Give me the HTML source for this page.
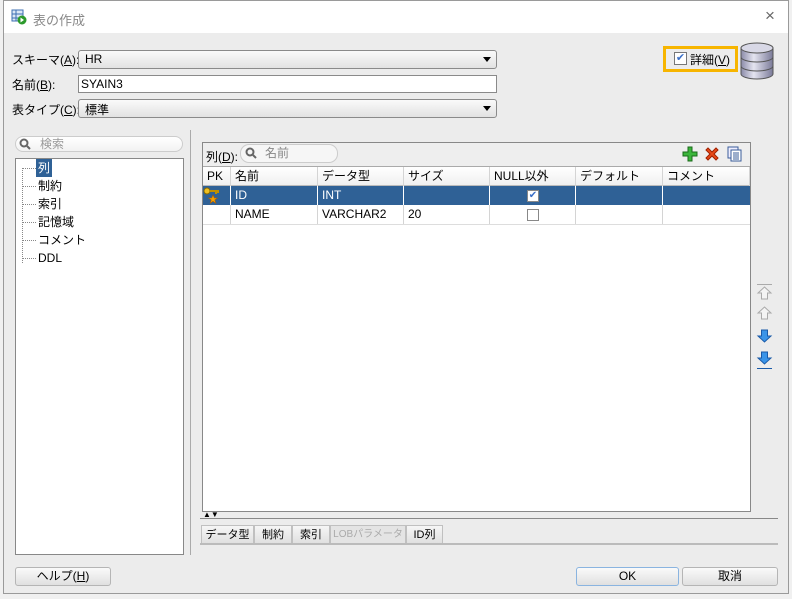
<!DOCTYPE html>
<html><head><meta charset="utf-8"><style>
*{box-sizing:border-box;margin:0;padding:0}
body{width:792px;height:599px;background:#f0f0f0;font-family:"Liberation Sans","Noto Sans CJK JP",sans-serif;font-size:12px;color:#000;position:relative;overflow:hidden}
.a{position:absolute;white-space:nowrap}
.win{left:3px;top:0;width:786px;height:594px;background:#ececec;border:1px solid #9a9a9a}
.title{left:4px;top:1px;width:784px;height:32px;background:#fff}
.combo{background:linear-gradient(#fafafa,#e2e2e2);border:1px solid #8a8a8a;border-radius:3px;padding:1px 6px;height:19px}
.combo:after{content:"";position:absolute;right:5px;top:6px;border:4px solid transparent;border-top:5px solid #000}
.btn{background:linear-gradient(#fafafa,#e0e0e0);border:1px solid #b5b5b5;border-radius:3px;text-align:center;height:19px;line-height:17px}
.td{position:absolute;height:19px;line-height:19px;padding-left:4px;border-right:1px solid #d4d4d4}
.tab{position:absolute;top:525px;height:19px;line-height:18px;text-align:center;background:linear-gradient(#f6f6f6,#e0e0e0);border:1px solid #c0c0c0;font-size:11px;white-space:nowrap;overflow:hidden}
</style></head><body>
<div class="a win"></div>
<div class="a title"></div>
<svg class="a" style="left:11px;top:9px" width="16" height="16"><rect x="1" y="1" width="11" height="11" fill="#dbe7f5" stroke="#3d6fb2"/><line x1="1" y1="5" x2="12" y2="5" stroke="#3d6fb2"/><line x1="1" y1="9" x2="12" y2="9" stroke="#3d6fb2"/><line x1="5" y1="1" x2="5" y2="12" stroke="#3d6fb2"/><circle cx="11" cy="11" r="4.5" fill="#2c9a2c"/><path d="M9.5 8.5 L13 11 L9.5 13.5Z" fill="#fff"/></svg>
<div class="a" style="left:33px;top:10px;color:#888;font-size:13px">表の作成</div>
<div class="a" style="left:765px;top:6px;color:#666;font-size:17px">×</div>

<div class="a" style="left:12px;top:51px">スキーマ(<u>A</u>):</div>
<div class="a combo" style="left:78px;top:50px;width:419px">HR</div>
<div class="a" style="left:12px;top:76px">名前(<u>B</u>):</div>
<div class="a" style="left:78px;top:75px;width:419px;height:18px;background:#fff;border:1px solid #8a8a8a;padding:1px 2px">SYAIN3</div>
<div class="a" style="left:12px;top:101px">表タイプ(<u>C</u>):</div>
<div class="a combo" style="left:78px;top:99px;width:419px">標準</div>

<div class="a" style="left:663px;top:46px;width:75px;height:26px;border:3px solid #f7b500"></div>
<div class="a" style="left:674px;top:52px;width:13px;height:13px;border:1px solid #777;background:#fff;color:#3a6fc8;font-size:11px;line-height:11px;text-align:center">✔</div>
<div class="a" style="left:690px;top:51px">詳細(<u>V</u>)</div>
<svg class="a" style="left:739px;top:42px" width="36" height="40"><defs><linearGradient id="g" x1="0" x2="1"><stop offset="0" stop-color="#8a8aa8"/><stop offset=".4" stop-color="#e4e4f0"/><stop offset="1" stop-color="#7a7a98"/></linearGradient></defs><path d="M2 6 V32 A16 5 0 0 0 34 32 V6Z" fill="url(#g)" stroke="#555"/><ellipse cx="18" cy="6" rx="16" ry="5" fill="#d8d8e6" stroke="#555"/><path d="M2 15 A16 5 0 0 0 34 15 M2 24 A16 5 0 0 0 34 24" fill="none" stroke="#555"/></svg>

<div class="a" style="left:15px;top:136px;width:168px;height:16px;border:1px solid #ccc;border-radius:8px;background:linear-gradient(#fff,#f2f2f2);color:#999;padding-left:24px;line-height:14px">検索</div>
<svg class="a" style="left:19px;top:138px" width="12" height="12"><circle cx="5" cy="5" r="3.5" fill="none" stroke="#666" stroke-width="2"/><line x1="8" y1="8" x2="11" y2="11" stroke="#666" stroke-width="2"/></svg>
<div class="a" style="left:15px;top:158px;width:169px;height:397px;background:#fff;border:1px solid #888"></div>
<div class="a" style="left:22px;top:168px;width:1px;height:95px;border-left:1px dotted #888"></div>
<div class="a" style="left:36px;top:159px;background:#2f6196;color:#fff;padding:0 2px;height:18px;line-height:18px">列</div>
<div class="a" style="left:38px;top:177px;line-height:18px">制約<br>索引<br>記憶域<br>コメント<br>DDL</div>
<div class="a" style="left:22px;top:168px;width:14px;border-top:1px dotted #888"></div>
<div class="a" style="left:22px;top:186px;width:14px;border-top:1px dotted #888"></div>
<div class="a" style="left:22px;top:204px;width:14px;border-top:1px dotted #888"></div>
<div class="a" style="left:22px;top:222px;width:14px;border-top:1px dotted #888"></div>
<div class="a" style="left:22px;top:240px;width:14px;border-top:1px dotted #888"></div>
<div class="a" style="left:22px;top:258px;width:14px;border-top:1px dotted #888"></div>

<div class="a" style="left:190px;top:130px;width:1px;height:425px;background:#aaa"></div>

<div class="a" style="left:202px;top:142px;width:549px;height:370px;background:#fff;border:1px solid #888"></div>
<div class="a" style="left:203px;top:143px;width:547px;height:24px;background:#eee;border-bottom:1px solid #aaa"></div>
<div class="a" style="left:206px;top:148px">列(<u>D</u>):</div>
<div class="a" style="left:240px;top:144px;width:98px;height:19px;border:1px solid #ccc;border-radius:9px;background:#f6f6f6;color:#888;padding-left:24px;line-height:17px">名前</div>
<svg class="a" style="left:245px;top:147px" width="12" height="12"><circle cx="5" cy="5" r="3.5" fill="none" stroke="#666" stroke-width="2"/><line x1="8" y1="8" x2="11" y2="11" stroke="#666" stroke-width="2"/></svg>
<svg class="a" style="left:682px;top:146px" width="16" height="16"><path d="M6 1h4v5h5v4h-5v5h-4v-5h-5v-4h5z" fill="#3bb53b" stroke="#1a6a1a"/></svg>
<svg class="a" style="left:704px;top:146px" width="16" height="16"><path d="M2 4L4 2L8 6L12 2L14 4L10 8L14 12L12 14L8 10L4 14L2 12L6 8Z" fill="#e84a1a" stroke="#a02000"/></svg>
<svg class="a" style="left:727px;top:146px" width="16" height="16"><rect x="1" y="1" width="10" height="11" fill="#eef" stroke="#3a5c9a"/><rect x="4" y="4" width="10" height="11" fill="#fff" stroke="#3a5c9a"/><path d="M6 7h6M6 9h6M6 11h6M6 13h6" stroke="#3a5c9a"/></svg>

<div class="a" style="left:203px;top:167px;width:547px;height:19px;background:linear-gradient(#fff,#f0f0f0);border-bottom:1px solid #bbb"></div>
<div class="td" style="left:203px;top:167px;width:28px">PK</div>
<div class="td" style="left:231px;top:167px;width:87px">名前</div>
<div class="td" style="left:318px;top:167px;width:86px">データ型</div>
<div class="td" style="left:404px;top:167px;width:86px">サイズ</div>
<div class="td" style="left:490px;top:167px;width:86px">NULL以外</div>
<div class="td" style="left:576px;top:167px;width:87px">デフォルト</div>
<div class="td" style="left:663px;top:167px;width:87px">コメント</div>

<div class="a" style="left:203px;top:186px;width:547px;height:19px;background:#2f6196"></div>
<div class="td" style="left:231px;top:186px;width:87px;color:#fff;border-color:#fff">ID</div>
<div class="td" style="left:318px;top:186px;width:86px;color:#fff;border-color:#fff">INT</div>
<div class="td" style="left:404px;top:186px;width:86px;border-color:#fff"></div>
<div class="td" style="left:490px;top:186px;width:86px;border-color:#fff"></div>
<div class="td" style="left:576px;top:186px;width:87px;border-color:#fff"></div>
<div class="td" style="left:203px;top:186px;width:28px;border-color:#fff"></div>
<svg class="a" style="left:203px;top:187px" width="18" height="18"><circle cx="4" cy="4" r="3" fill="#f0c020" stroke="#8a6a00"/><path d="M7 4h9M13 4v3M15 4v2" stroke="#c09000" stroke-width="2"/><path d="M10 8l1.3 3h3l-2.5 2 1 3.2-2.8-2-2.8 2 1-3.2-2.5-2h3z" fill="#f5a000" stroke="#b06000" stroke-width=".6"/></svg>
<div class="a" style="left:527px;top:190px;width:12px;height:12px;background:#fff;border:1px solid #888;color:#3a6fc8;font-size:10px;line-height:10px;text-align:center">✔</div>

<div class="a" style="left:203px;top:224px;width:547px;border-top:1px solid #ddd"></div>
<div class="td" style="left:203px;top:205px;width:28px"></div>
<div class="td" style="left:231px;top:205px;width:87px">NAME</div>
<div class="td" style="left:318px;top:205px;width:86px">VARCHAR2</div>
<div class="td" style="left:404px;top:205px;width:86px">20</div>
<div class="td" style="left:490px;top:205px;width:86px"></div>
<div class="td" style="left:576px;top:205px;width:87px"></div>
<div class="a" style="left:527px;top:209px;width:12px;height:12px;background:#fff;border:1px solid #888"></div>

<svg class="a" style="left:756px;top:283px" width="18" height="90">
<path d="M1 1.5h15" stroke="#aaa"/>
<path d="M8.5 4L15 10H11.5V16H5.5V10H2Z" fill="#f4f4f4" stroke="#aaa"/>
<path d="M8.5 24L15 30H11.5V36H5.5V30H2Z" fill="#f4f4f4" stroke="#aaa"/>
<path d="M5.5 47V53H2L8.5 59L15 53H11.5V47Z" fill="#3a94e8" stroke="#1a5aa8"/>
<path d="M5.5 69V75H2L8.5 81L15 75H11.5V69Z" fill="#3a94e8" stroke="#1a5aa8"/>
<path d="M1 85.5h15" stroke="#1a5aa8"/>
</svg>

<div class="a" style="left:203px;top:511px;font-size:8px;line-height:8px">▲▼</div>
<div class="a" style="left:200px;top:518px;width:578px;height:1px;background:#888"></div>
<div class="tab" style="left:201px;width:53px">データ型</div>
<div class="tab" style="left:254px;width:38px">制約</div>
<div class="tab" style="left:292px;width:38px">索引</div>
<div class="tab" style="left:330px;width:76px;color:#aaa;background:#e4e4e4;font-size:10px">LOBパラメータ</div>
<div class="tab" style="left:406px;width:37px">ID列</div>
<div class="a" style="left:200px;top:543px;width:578px;height:2px;background:#bbb"></div>

<div class="a btn" style="left:15px;top:567px;width:96px">ヘルプ(<u>H</u>)</div>
<div class="a btn" style="left:576px;top:567px;width:103px;border-color:#8ab4e0">OK</div>
<div class="a btn" style="left:682px;top:567px;width:96px">取消</div>
</body></html>
